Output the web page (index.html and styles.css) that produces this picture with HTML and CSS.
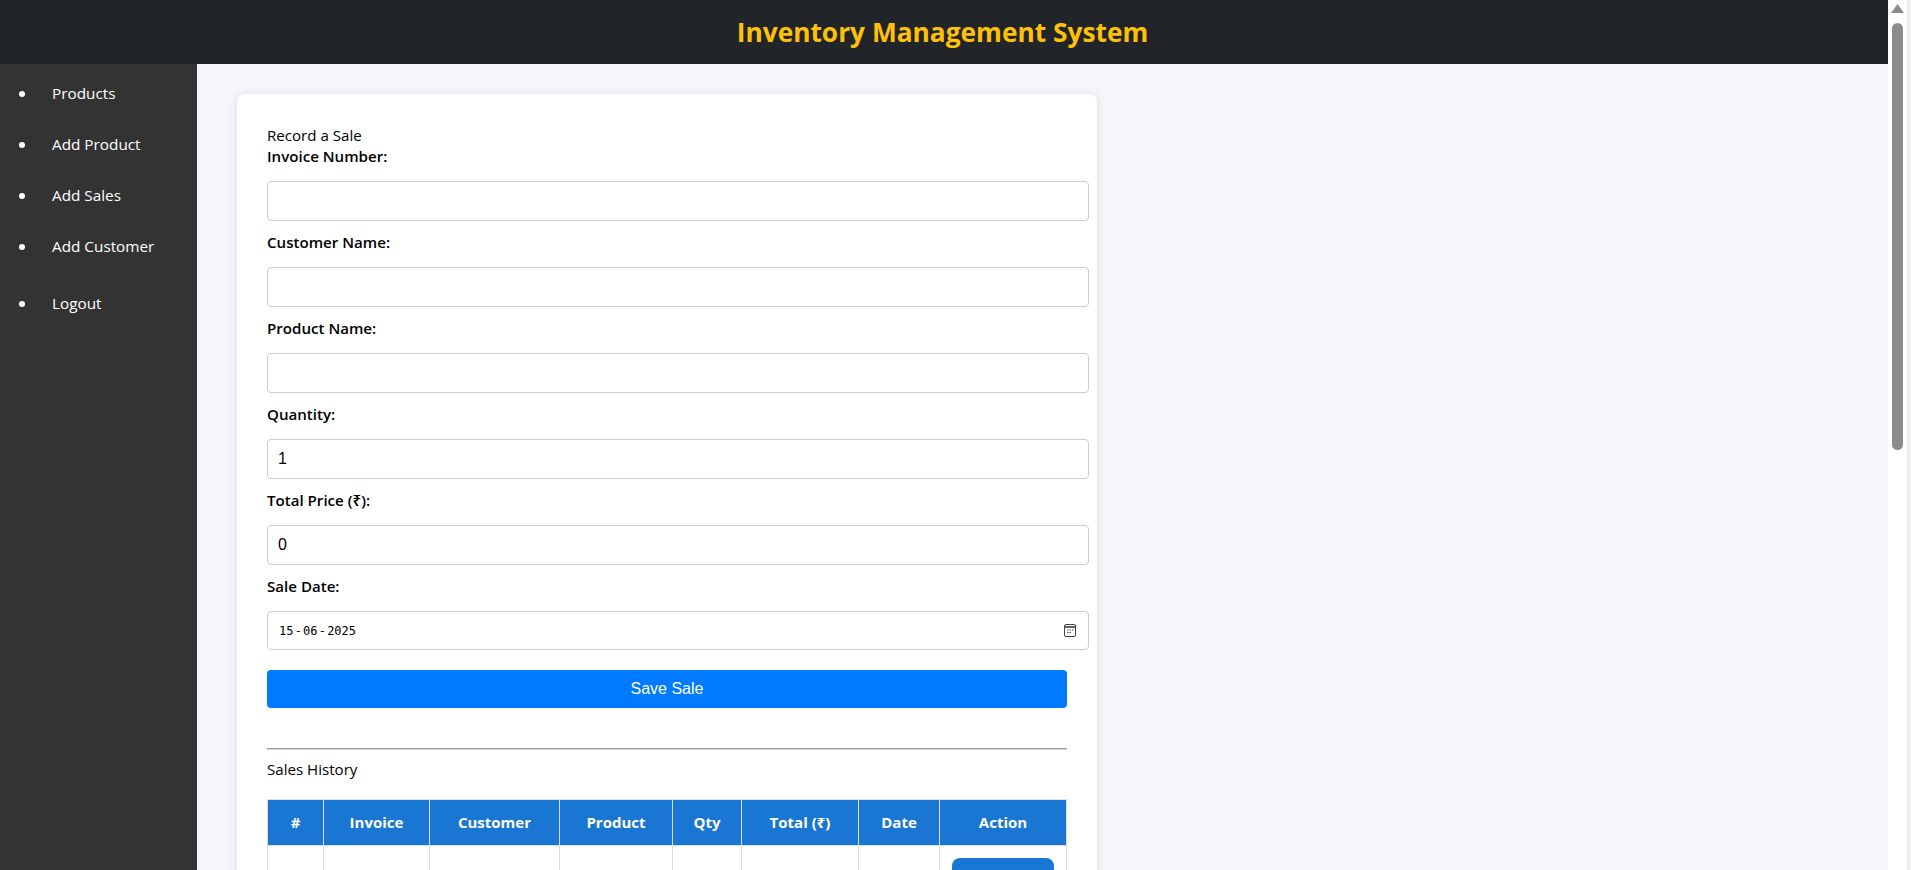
FILE: index.html
```html
<!DOCTYPE html>
<html lang="en">
<head>
<meta charset="utf-8">
<title>Inventory Management System</title>
<link rel="stylesheet" href="styles.css">
</head>
<body>
<div class="window">
  <div class="page">
    <header class="topbar"><h1 class="topbar-title">Inventory Management System</h1></header>
    <div class="layout">
      <nav class="sidebar">
        <ul class="nav-list">
          <li class="nav-item"><a class="nav-link" href="#">Products</a></li>
          <li class="nav-item"><a class="nav-link" href="#">Add Product</a></li>
          <li class="nav-item"><a class="nav-link" href="#">Add Sales</a></li>
          <li class="nav-item"><a class="nav-link" href="#">Add Customer</a></li>
          <li class="nav-item nav-item-logout"><a class="nav-link" href="#">Logout</a></li>
        </ul>
      </nav>
      <main class="content">
        <section class="card">
          <div class="section-title">Record a Sale</div>
          <form class="sale-form">
            <label class="field-label" for="inv">Invoice Number:</label>
            <input class="field-input" id="inv" type="text">
            <label class="field-label" for="cust">Customer Name:</label>
            <input class="field-input" id="cust" type="text">
            <label class="field-label" for="prod">Product Name:</label>
            <input class="field-input" id="prod" type="text">
            <label class="field-label" for="qty">Quantity:</label>
            <input class="field-input" id="qty" type="text" value="1">
            <label class="field-label" for="total">Total Price (₹):</label>
            <input class="field-input" id="total" type="text" value="0">
            <label class="field-label">Sale Date:</label>
            <div class="date-field">
              <div class="date-value"><span>15</span><span class="date-sep">-</span><span>06</span><span class="date-sep">-</span><span>2025</span></div>
              <svg class="date-icon" width="12" height="13" viewBox="0 0 12 13" aria-hidden="true">
                <rect x="0.5" y="0.5" width="11" height="12" rx="1.5" fill="#fff" stroke="#444" stroke-width="1"/>
                <path d="M1 3h10" stroke="#222" stroke-width="1.4"/>
                <path d="M3 6h1.5M5.5 6H7M8 6h1.5M3 8.5h1.5M5.5 8.5H7" stroke="#555" stroke-width="1.2"/>
              </svg>
            </div>
            <button class="save-btn" type="button">Save Sale</button>
          </form>
          <hr class="divider">
          <div class="section-title history-title">Sales History</div>
          <table class="sales-table">
            <colgroup>
              <col class="col-num"><col class="col-inv"><col class="col-cust"><col class="col-prod">
              <col class="col-qty"><col class="col-total"><col class="col-date"><col class="col-act">
            </colgroup>
            <thead>
              <tr><th>#</th><th>Invoice</th><th>Customer</th><th>Product</th><th>Qty</th><th>Total (₹)</th><th>Date</th><th>Action</th></tr>
            </thead>
            <tbody>
              <tr><td></td><td></td><td></td><td></td><td></td><td></td><td></td><td><button class="row-btn" type="button"></button></td></tr>
            </tbody>
          </table>
        </section>
      </main>
    </div>
  </div>
  <div class="scrollbar" aria-hidden="true">
    <svg class="scroll-arrow" width="13" height="9" viewBox="0 0 13 9"><path d="M6.5 0L13 9H0z" fill="#8c8c8c"/></svg>
    <div class="scroll-thumb"></div>
  </div>
  <div class="edge"></div>
</div>
</body>
</html>
```
FILE: styles.css
```css
* { box-sizing: border-box; }
html, body { margin: 0; height: 100%; overflow: hidden; }
body { font-family: "Open Sans", "Noto Sans", sans-serif; color: #000; background: #fff; }
.window { display: flex; height: 870px; overflow: hidden; }
.page { width: 1888px; flex: none; display: flex; flex-direction: column; height: 870px; overflow: hidden; }
.topbar { height: 64px; flex: none; background: #212529; display: flex; align-items: center; justify-content: center; padding-right: 3px; }
.topbar-title { margin: 0; font-size: 26.3px; font-weight: 700; color: #ffc107; line-height: 1; }
.layout { display: flex; flex: 1; min-height: 0; }
.sidebar { width: 197px; flex: none; background: #333; color: #fff; }
.nav-list { margin: 0; padding: 16px 0 0; list-style: none; }
.nav-item { height: 51px; display: flex; align-items: flex-start; padding-left: 19px; font-size: 15.3px; line-height: 26px; }
.nav-item::before { content: ""; width: 6px; height: 6px; border-radius: 50%; background: #fff; margin-top: 11px; margin-right: 27px; flex: none; }
.nav-item-logout { margin-top: 6px; }
.nav-link { color: #fff; text-decoration: none; }
.content { flex: 1; min-width: 0; background: #f4f6f9; padding: 30px 40px; }
.card { width: 860px; height: 900px; background: #fff; border-radius: 8px; padding: 29px 30px 30px; box-shadow: 0 0 10px rgba(0,0,0,.1); }
.section-title { font-size: 15.1px; line-height: 24px; }
.field-label { display: block; font-size: 15.1px; font-weight: 600; line-height: 18px; margin-bottom: 16px; }
.field-input { display: block; width: 822px; height: 40px; padding: 0 10px; margin-bottom: 12px; border: 1px solid #ccc; border-radius: 4px; font: 16px "Liberation Sans", sans-serif; color: #000; background: #fff; }
.date-field { display: flex; align-items: center; justify-content: space-between; width: 822px; height: 39px; padding: 0 12px 0 11px; margin-bottom: 20px; border: 1px solid #ccc; border-radius: 4px; }
.date-value { font: 12px "DejaVu Sans Mono", monospace; color: #000; }
.date-sep { margin: 0 1.2px; }
.date-icon { flex: none; }
.save-btn { display: block; width: 800px; height: 38px; border: 0; border-radius: 4px; background: #007bff; color: #fff; font: 16px "Liberation Sans", sans-serif; }
.divider { margin: 40px 0 7px; width: 800px; height: 2px; border: 0; border-top: 1px solid #9a9a9a; border-bottom: 1px solid #d8d8d8; }
.history-title { margin-bottom: 18px; }
.sales-table { width: 799px; table-layout: fixed; border-collapse: collapse; }
.col-num { width: 56px; } .col-inv { width: 106px; } .col-cust { width: 130px; } .col-prod { width: 113px; }
.col-qty { width: 69px; } .col-total { width: 117px; } .col-date { width: 81px; } .col-act { width: 127px; }
.sales-table th { height: 46px; padding: 0 0 1px; background: #1976d2; color: #fff; font-size: 15px; font-weight: 700; border: 1px solid #ddd; text-align: center; }
.sales-table td { height: 60px; padding: 12px; border: 1px solid #ddd; text-align: center; }
.row-btn { display: block; width: 102px; height: 40px; border: 0; border-radius: 8px; background: #1976d2; }
.scrollbar { width: 19px; flex: none; background: #fff; display: flex; flex-direction: column; align-items: center; padding-top: 4px; }
.scroll-arrow { flex: none; }
.scroll-thumb { width: 11px; height: 427px; margin-top: 10px; background: #8c8c8c; border-radius: 6px; }
.edge { width: 4px; flex: none; background: #eee; }
```
